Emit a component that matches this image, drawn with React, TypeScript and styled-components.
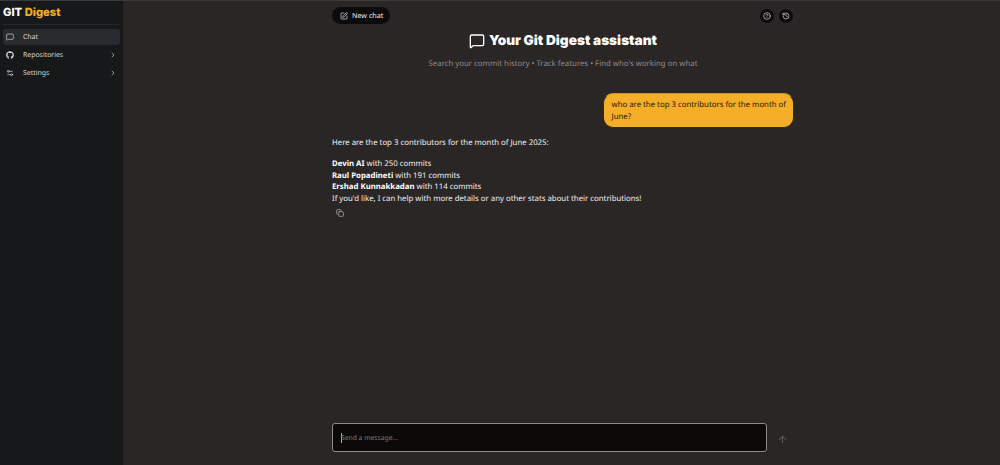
import React from "react";
import styled, { createGlobalStyle } from "styled-components";
import { MessageSquare, Settings2, ChevronRight, SquarePen, CircleHelp, History, Copy, ArrowUp } from "lucide-react";
import { FaGithub } from "react-icons/fa";

const Global = createGlobalStyle`
  html, body { margin: 0; padding: 0; height: 100%; background: #2a2626; }
  #root { height: 465px; }
  * { box-sizing: border-box; text-rendering: geometricPrecision; }
`;
const Shell = styled.div`
  display: flex; width: 1000px; height: 465px; overflow: hidden;
  font-family: "Noto Sans", "Open Sans", sans-serif; color: #f0f0f0;
  border-top: 1px solid #3a3a3a;
`;
const Sidebar = styled.aside`
  width: 124px; flex: none; background: #17181a; padding: 0 3px;
  border-right: 1px solid #222;
`;
const Logo = styled.div`
  font-family: Inter, sans-serif; font-weight: 800; font-size: 11.2px; line-height: 14px;
  color: #fff; padding: 4px 0; height: 24px; border-bottom: 1px solid #25262a;
`;
const Accent = styled.span`color: #f5b120;`;
const Nav = styled.nav`display: flex; flex-direction: column; margin-top: 4px; gap: 2px;`;
const NavItem = styled.div<{ $active?: boolean }>`
  display: flex; align-items: center; height: 16px; padding: 0 3px 0 3px; gap: 9px;
  border-radius: 3px; font-size: 6.9px; color: #d8d8d8;
  background: ${p => (p.$active ? "#292a2d" : "transparent")};
`;
const NavLabel = styled.span`flex: 1;`;
const Main = styled.main`
  flex: 1; display: flex; flex-direction: column; align-items: center; min-width: 0; padding-left: 2px;
`;
const Column = styled.div`
  width: 462px; height: 100%; display: flex; flex-direction: column;
`;
const TopBar = styled.div`
  display: flex; align-items: center; justify-content: space-between; padding-top: 6px; height: 23px;
`;
const NewChat = styled.button`
  display: flex; align-items: center; gap: 4px; height: 17px; width: 58px; padding: 0 0 0 8px;
  border: 0; border-radius: 9px; background: #0b0b0b; color: #ececec;
  font: 400 7.2px "Noto Sans", sans-serif;
`;
const RoundGroup = styled.div`display: flex; gap: 5px; margin-right: 1px;`;
const RoundBtn = styled.div`
  width: 14px; height: 14px; border-radius: 50%; background: #0b0b0b;
  display: flex; align-items: center; justify-content: center; color: #ddd;
`;
const Hero = styled.div`display: flex; flex-direction: column; align-items: center;`;
const Title = styled.h1`
  display: flex; align-items: center; gap: 4px; margin: 7px 0 0; height: 20px;
  font: 900 13.6px/20px Inter, sans-serif; color: #fff;
`;
const Sub = styled.p`
  margin: 7px 0 0; font-size: 7.82px; line-height: 12px; color: #8e8b8b;
`;
const Thread = styled.div`flex: 1; display: flex; flex-direction: column; margin-top: 23px;`;
const UserBubble = styled.div`
  align-self: flex-end; width: 191px; height: 35px; padding: 0 5px 0 7.5px; background: #f5ae27;
  border: 1px solid #2f2a1e; border-top-color: #c9962a; border-radius: 10px;
  color: #1f1810; font-size: 7.8px; line-height: 12px;
  display: flex; align-items: center;
`;
const Reply = styled.div`margin-top: 10px; font-size: 7.8px; line-height: 11.8px; color: #f0f0f0;`;
const Para = styled.p`margin: 0 0 9px;`;
const Line = styled.div``;
const Strong = styled.strong`font-weight: 700; color: #fff;`;
const CopyBtn = styled.div`display: flex; margin: 3px 0 0 4px; color: #bbb;`;
const Composer = styled.div`display: flex; align-items: center; gap: 10px; padding-bottom: 13px;`;
const InputBox = styled.div`
  width: 435px; height: 29px; background: #0b0a09; border: 1px solid #8b8b8b; border-radius: 3px;
  display: flex; align-items: center; padding-left: 8px;
  font-size: 6.75px; color: #7d7d7d;
`;
const Caret = styled.span`width: 1px; height: 10px; background: #aaa; margin-right: -1px;`;
const Send = styled.div`color: #666; display: flex; height: 12px; margin-top: 4px;`;

export default function App() {
  return (
    <Shell>
      <Global />
      <Sidebar>
        <Logo>GIT <Accent>Digest</Accent></Logo>
        <Nav>
          <NavItem $active><MessageSquare size={8} strokeWidth={2} /><NavLabel>Chat</NavLabel></NavItem>
          <NavItem><FaGithub size={8} /><NavLabel>Repositories</NavLabel><ChevronRight size={8} /></NavItem>
          <NavItem><Settings2 size={8} /><NavLabel>Settings</NavLabel><ChevronRight size={8} /></NavItem>
        </Nav>
      </Sidebar>
      <Main>
        <Column>
          <TopBar>
            <NewChat><SquarePen size={8} />New chat</NewChat>
            <RoundGroup>
              <RoundBtn><CircleHelp size={8} /></RoundBtn>
              <RoundBtn><History size={8} /></RoundBtn>
            </RoundGroup>
          </TopBar>
          <Hero>
            <Title><MessageSquare size={16} strokeWidth={2} />Your Git Digest assistant</Title>
            <Sub>Search your commit history • Track features • Find who's working on what</Sub>
          </Hero>
          <Thread>
            <UserBubble>who are the top 3 contributors for the month of June?</UserBubble>
            <Reply>
              <Para>Here are the top 3 contributors for the month of June 2025:</Para>
              <Line><Strong>Devin AI</Strong> with 250 commits</Line>
              <Line><Strong>Raul Popadineti</Strong> with 191 commits</Line>
              <Line><Strong>Ershad Kunnakkadan</Strong> with 114 commits</Line>
              <Line>If you'd like, I can help with more details or any other stats about their contributions!</Line>
            </Reply>
            <CopyBtn><Copy size={8} /></CopyBtn>
          </Thread>
          <Composer>
            <InputBox><Caret />Send a message...</InputBox>
            <Send><ArrowUp size={11} /></Send>
          </Composer>
        </Column>
      </Main>
    </Shell>
  );
}
